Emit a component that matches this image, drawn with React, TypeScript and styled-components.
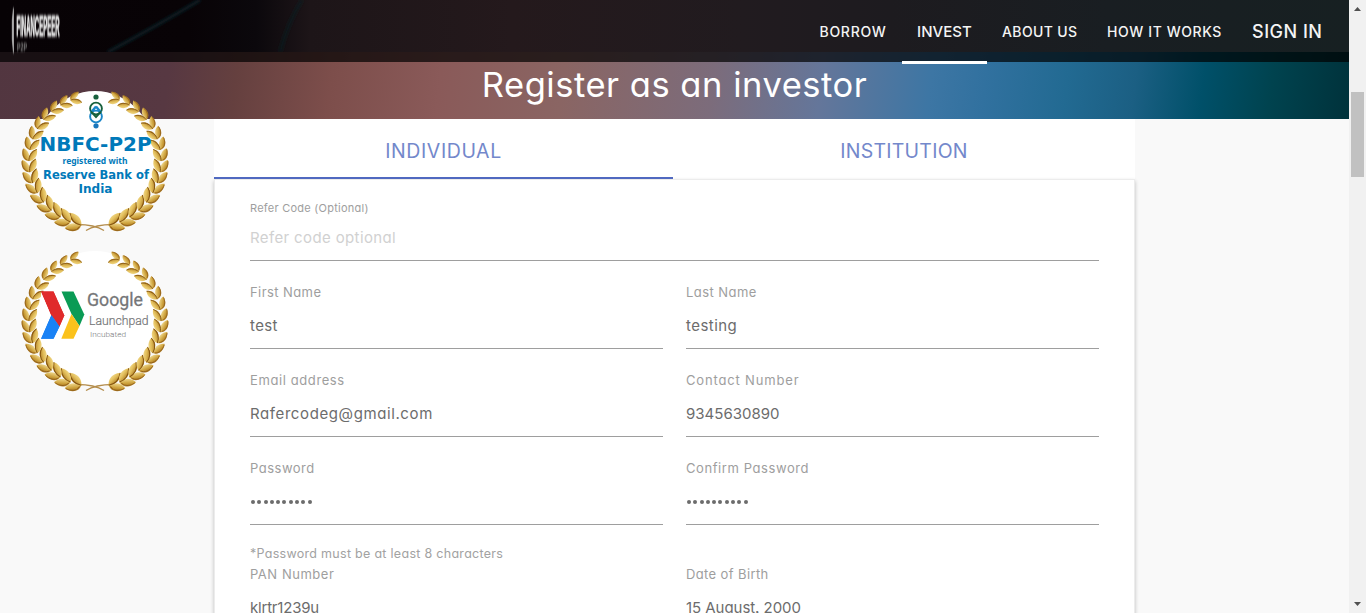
import React from "react";
import styled, { createGlobalStyle } from "styled-components";

const Global = createGlobalStyle`
  * { box-sizing: border-box; }
  html, body { margin: 0; padding: 0; height: 613px; overflow: hidden; background: #f9f9f9; }
  body {
    font-family: Inter, "Liberation Sans", sans-serif;
    font-feature-settings: "cv11", "ss03";
  }
`;

const Window = styled.div`
  display: flex;
  width: 1366px;
  height: 613px;
  overflow: hidden;
`;

const Page = styled.div`
  position: relative;
  flex: 1;
  min-width: 0;
  height: 613px;
  overflow: hidden;
  background: #f9f9f9;
`;

const HeroArea = styled.div`
  height: 119px;
  background: linear-gradient(97deg, #523640 0%, #573842 13%, #65403f 18%, #7d4e4b 25%, #8a5a59 33%,
    #8a6563 42%, #7c6c7b 53%, #64769a 61%, #3d76a4 69%, #31719f 73%, #226a92 79%, #1b5f83 84%,
    #005069 89%, #00434f 94%, #00323b 100%);
`;

const Header = styled.header`
  position: relative;
  height: 62px;
  display: flex;
  justify-content: space-between;
  padding-right: 12px;
  background:
    linear-gradient(90deg, #070205 0%, #080306 14%, #0b080c 19%, #1d1518 23%, #24191c 38%, #211b1f 55%, #1d1b1f 66%, #191e22 82%, #172022 100%) 0 0 / 100% 52px no-repeat,
    rgba(0, 0, 0, 0.7);
`;

const Streak = styled.svg`
  position: absolute;
  left: 100px;
  top: 0;
`;

const LogoMark = styled.svg`
  display: block;
  position: relative;
`;

const Nav = styled.nav`
  position: relative;
  display: flex;
`;

const NavItem = styled.a<{ $w: number; $active?: boolean; $size?: number; $track: number }>`
  width: ${(p) => p.$w}px;
  height: 64px;
  padding-left: 15px;
  line-height: 64px;
  white-space: nowrap;
  color: #f4f4f4;
  font-weight: 500;
  font-size: ${(p) => p.$size ?? 14}px;
  letter-spacing: ${(p) => p.$track}px;
  border-bottom: 3px solid ${(p) => (p.$active ? "#fff" : "transparent")};
`;

const Title = styled.h1`
  margin: 0;
  height: 57px;
  line-height: 46px;
  text-align: center;
  color: #fff;
  font-weight: 400;
  font-size: 34.5px;
  letter-spacing: 0.52px;
`;

const Main = styled.main`
  width: 921px;
  margin-left: 214px;
`;

const Tabs = styled.div`
  display: flex;
  height: 60px;
  background: #fff;
`;

const Tab = styled.div<{ $w: number; $active?: boolean; $track: number }>`
  width: ${(p) => p.$w}px;
  text-align: center;
  line-height: 65px;
  height: 60px;
  font-size: 19.5px;
  letter-spacing: ${(p) => p.$track}px;
  color: #7388cb;
  box-shadow: ${(p) => (p.$active ? "inset 0 -2px 0 #5069c0" : "none")};
`;

const Card = styled.section`
  height: 460px;
  padding: 0 35px;
  background: #fff;
  border: 1px solid #ececec;
  box-shadow: 0 2px 4px rgba(0, 0, 0, 0.24);
`;

const Row = styled.div`
  display: grid;
  grid-template-columns: 1fr 1fr;
  column-gap: 23px;
`;

const Field = styled.div<{ $top: number; $gap?: number }>`
  padding-top: ${(p) => p.$top}px;
  display: flex;
  flex-direction: column;
  row-gap: ${(p) => p.$gap ?? 12}px;
  padding-bottom: 10px;
  border-bottom: 1px solid #9e9e9e;
`;

const Label = styled.label<{ $small?: boolean; $track?: number }>`
  height: 20px;
  line-height: 20px;
  white-space: nowrap;
  color: #9e9e9e;
  font-size: ${(p) => (p.$small ? 11 : 13)}px;
  letter-spacing: ${(p) => p.$track ?? 0}px;
`;

const Value = styled.div<{ $hint?: boolean; $track?: number }>`
  height: 24px;
  line-height: 24px;
  white-space: nowrap;
  color: ${(p) => (p.$hint ? "#d1d1d1" : "#6c6c6c")};
  font-size: 15px;
  letter-spacing: ${(p) => p.$track ?? 0}px;
`;

const Dots = styled.div`
  height: 24px;
  display: flex;
  align-items: center;
  gap: 2.3px;
  padding-left: 1px;
`;

const Dot = styled.span`
  width: 4px;
  height: 4px;
  border-radius: 50%;
  background: #6c6c6c;
`;

const Note = styled.p`
  margin: 0;
  padding-top: 19px;
  height: 39px;
  line-height: 20px;
  color: #a2a2a2;
  font-size: 12.5px;
  letter-spacing: 0.29px;
`;

const Seals = styled.aside`
  position: absolute;
  left: 15px;
  top: 86px;
  display: flex;
  flex-direction: column;
`;

const Seal = styled.svg`
  display: block;
`;

const Scrollbar = styled.div`
  width: 17px;
  height: 613px;
  background: #f1f1f1;
  display: flex;
  flex-direction: column;
  align-items: center;
`;

const Thumb = styled.div`
  width: 13px;
  height: 85px;
  margin: 75px 0 419px;
  background: #c1c1c1;
`;

const Arrow = styled.svg`
  display: block;
`;

const leafPairs = 16;

function Branch() {
  const leaves: React.ReactNode[] = [];
  for (let i = 0; i < leafPairs; i++) {
    const t = i / (leafPairs - 1);
    const a = ((16 + t * 145) * Math.PI) / 180;
    const x = 66 * Math.sin(a);
    const y = 65.5 * Math.cos(a);
    const heading = (-a * 180) / Math.PI;
    const s = 1.16 - 0.36 * t;
    leaves.push(
      <g key={i} transform={`translate(${x} ${y}) rotate(${heading}) scale(${s})`}>
        <path d="M-4 0C-4 5.500 2 9 9 6.500C7.500 1.500 2-1.500-4 0Z" fill="url(#leafDark)" />
        <path d="M-4 0C-3.500-5 2-9.500 8.500-7.500C8.500-2.500 2.500 1-4 0Z" fill="url(#leafLight)" />
        <path d="M-4 0C1 .5 6-2 8.500-7.500" stroke="#85540f" strokeWidth=".9" fill="none" />
        <path d="M-3 1.500C-2 5.500 3 7.500 8 6.500" stroke="#93601a" strokeWidth=".8" fill="none" />
      </g>
    );
  }
  return (
    <g>
      <path d="M-9 69.500C-2 65 6 63.500 18 63.500" stroke="#b48d4c" strokeWidth="1.300" fill="none" />
      {leaves}
    </g>
  );
}

function Wreath() {
  return (
    <>
      <defs>
        <linearGradient id="leafDark" x1="0" y1="1" x2=".7" y2="0">
          <stop offset="0" stopColor="#8a5712" />
          <stop offset=".5" stopColor="#cda13c" />
          <stop offset="1" stopColor="#faeaa6" />
        </linearGradient>
        <linearGradient id="leafLight" x1="0" y1="0" x2=".8" y2="1">
          <stop offset="0" stopColor="#fdf0b4" />
          <stop offset=".5" stopColor="#e3bf5c" />
          <stop offset="1" stopColor="#94600f" />
        </linearGradient>
      </defs>
      <ellipse cx="80" cy="73" rx="62" ry="68" fill="#fff" />
      <g transform="translate(80 75)">
        <Branch />
        <g transform="scale(-1 1)">
          <Branch />
        </g>
      </g>
    </>
  );
}

function NbfcSeal() {
  return (
    <Seal width="160" height="160" viewBox="0 0 160 160">
      <Wreath />
      <g fill="none" strokeWidth="1.900">
        <circle cx="81" cy="30.500" r="5.900" stroke="#1a86c8" />
        <circle cx="81" cy="22.500" r="5.900" stroke="#17603d" />
        <path d="M81 20.500L76 26.500M81 20.500L86 26.500" stroke="#1a86c8" strokeWidth="2.400" />
        <path d="M76 25.500L81 31L86 25.500" stroke="#17603d" />
      </g>
      <circle cx="81" cy="11" r="2.600" fill="#17603d" />
      <circle cx="81" cy="39.800" r="2.600" fill="#1976bb" />
      <g fill="#0079b9" fontFamily="'DejaVu Sans'" fontWeight="700">
        <text x="24.500" y="64.500" fontSize="19" textLength="112" lengthAdjust="spacingAndGlyphs">NBFC-P2P</text>
        <text x="47.500" y="77.500" fontFamily="'Noto Sans'" fontSize="9" textLength="65" lengthAdjust="spacingAndGlyphs">registered with</text>
        <text x="28" y="92.500" fontSize="12" textLength="106" lengthAdjust="spacingAndGlyphs">Reserve Bank of</text>
        <text x="63.500" y="107" fontSize="12" textLength="34" lengthAdjust="spacingAndGlyphs">India</text>
      </g>
    </Seal>
  );
}

function LaunchpadSeal() {
  return (
    <Seal width="160" height="160" viewBox="0 0 160 160">
      <Wreath />
      <g transform="translate(-5 -1)">
        <path d="M31 46.500H43.500L54.300 70.500L49.500 81.500L41 70.500Z" fill="#e02a2b" />
        <path d="M41 70.500L49.500 81.500L43.500 93.700H31Z" fill="#1a82f5" />
        <path d="M31 46.500L41 70.500L31 93.700Z" fill="#fff" />
        <path d="M31 46.500H43.500L54.300 70.500L49.500 81.500L41.500 70Z" fill="#e02a2b" />
        <path d="M41.500 70L49.500 81.500L43.500 93.700H31Z" fill="#1a82f5" />
        <path d="M51.500 46.500H63.500L74.300 69.500L69.500 81L61.500 69Z" fill="#0a9b55" />
        <path d="M61.500 69L69.500 81L63.500 93.700H51.300Z" fill="#fbc21c" />
      </g>
      <g fill="#757678" fontFamily="Roboto">
        <text x="72" y="60" fontSize="19" stroke="#757678" strokeWidth=".3" textLength="56" lengthAdjust="spacingAndGlyphs">Google</text>
        <text x="74" y="78.500" fontSize="13.500" fontWeight="300" stroke="#757678" strokeWidth=".2" textLength="59.500" lengthAdjust="spacingAndGlyphs">Launchpad</text>
        <text x="75" y="90.500" fontSize="8" fontWeight="300" textLength="36" lengthAdjust="spacingAndGlyphs">Incubated</text>
      </g>
    </Seal>
  );
}

function Logo() {
  return (
    <LogoMark width="80" height="62" viewBox="0 0 80 62">
      <defs>
        <filter id="soft" x="-10%" y="-10%" width="120%" height="120%">
          <feGaussianBlur stdDeviation=".4 1.8" />
        </filter>
      </defs>
      <g filter="url(#soft)" fill="#f0f0f0" fontFamily="'Liberation Sans'" fontWeight="700">
        <path d="M13.500 8V53L12.300 40V20Z" stroke="#a9a9a9" strokeWidth=".8" />
        <text transform="translate(16.500 35.500) scale(1 3.200)" fontSize="9" stroke="#f0f0f0" strokeWidth=".3" textLength="43" lengthAdjust="spacingAndGlyphs">FINANCEPEER</text>
        <text transform="translate(17 50.500) scale(1 2)" fontSize="5.500" fill="#858585" textLength="10" lengthAdjust="spacingAndGlyphs">P2P</text>
      </g>
    </LogoMark>
  );
}

const bullets = Array.from({ length: 10 });

function PasswordField({ label, track }: { label: string; track: number }) {
  return (
    <Field $top={21}>
      <Label $track={track}>{label}</Label>
      <Dots>{bullets.map((_, i) => <Dot key={i} />)}</Dots>
    </Field>
  );
}

type TextFieldProps = { label: string; value: string; lt?: number; vt?: number; top?: number };

function TextField({ label, value, lt, vt, top = 21 }: TextFieldProps) {
  return (
    <Field $top={top}>
      <Label $track={lt}>{label}</Label>
      <Value $track={vt}>{value}</Value>
    </Field>
  );
}

export default function App() {
  return (
    <Window>
      <Global />
      <Page>
        <HeroArea>
          <Header>
            <Streak width="220" height="52" viewBox="0 0 220 52">
              <defs>
                <filter id="haze"><feGaussianBlur stdDeviation="1.500" /></filter>
              </defs>
              <g filter="url(#haze)" fill="none">
                <path d="M8 52Q60 24 100 0" stroke="#0b2830" strokeWidth="3" opacity=".75" />
                <path d="M180 52Q188 22 202 0" stroke="#0c2026" strokeWidth="4" opacity=".4" />
              </g>
            </Streak>
            <Logo />
            <Nav>
              <NavItem $w={97.5} $track={0.72}>BORROW</NavItem>
              <NavItem $w={85} $track={0.05} $size={15} $active>INVEST</NavItem>
              <NavItem $w={105} $track={0.38}>ABOUT US</NavItem>
              <NavItem $w={145} $track={0.6}>HOW IT WORKS</NavItem>
              <NavItem $w={100} $track={0.5} $size={18}>SIGN IN</NavItem>
            </Nav>
          </Header>
          <Title>Register as an investor</Title>
        </HeroArea>
        <Main>
          <Tabs>
            <Tab $w={459} $track={0.6} $active>INDIVIDUAL</Tab>
            <Tab $w={462} $track={0.25}>INSTITUTION</Tab>
          </Tabs>
          <Card>
            <Field $top={18} $gap={8}>
              <Label $small $track={0.25}>Refer Code (Optional)</Label>
              <Value $hint $track={0.37}>Refer code optional</Value>
            </Field>
            <Row>
              <TextField label="First Name" value="test" lt={0.42} vt={0.4} />
              <TextField label="Last Name" value="testing" lt={0.45} vt={0.45} />
              <TextField label="Email address" value="Rafercodeg@gmail.com" lt={0.6} vt={0.6} />
              <TextField label="Contact Number" value="9345630890" lt={0.84} />
              <PasswordField label="Password" track={0.5} />
              <PasswordField label="Confirm Password" track={0.58} />
            </Row>
            <Note>*Password must be at least 8 characters</Note>
            <Row>
              <TextField label="PAN Number" value="klrtr1239u" lt={0.53} vt={-0.2} top={0} />
              <TextField label="Date of Birth" value="15 August, 2000" lt={0.38} vt={-0.05} top={0} />
            </Row>
          </Card>
        </Main>
        <Seals>
          <NbfcSeal />
          <LaunchpadSeal />
        </Seals>
      </Page>
      <Scrollbar>
        <Arrow width="17" height="17" viewBox="0 0 17 17">
          <path d="M5 11L8.500 7L12 11Z" fill="#505050" />
        </Arrow>
        <Thumb />
        <Arrow width="17" height="17" viewBox="0 0 17 17">
          <path d="M5 6L8.500 10L12 6Z" fill="#505050" />
        </Arrow>
      </Scrollbar>
    </Window>
  );
}
